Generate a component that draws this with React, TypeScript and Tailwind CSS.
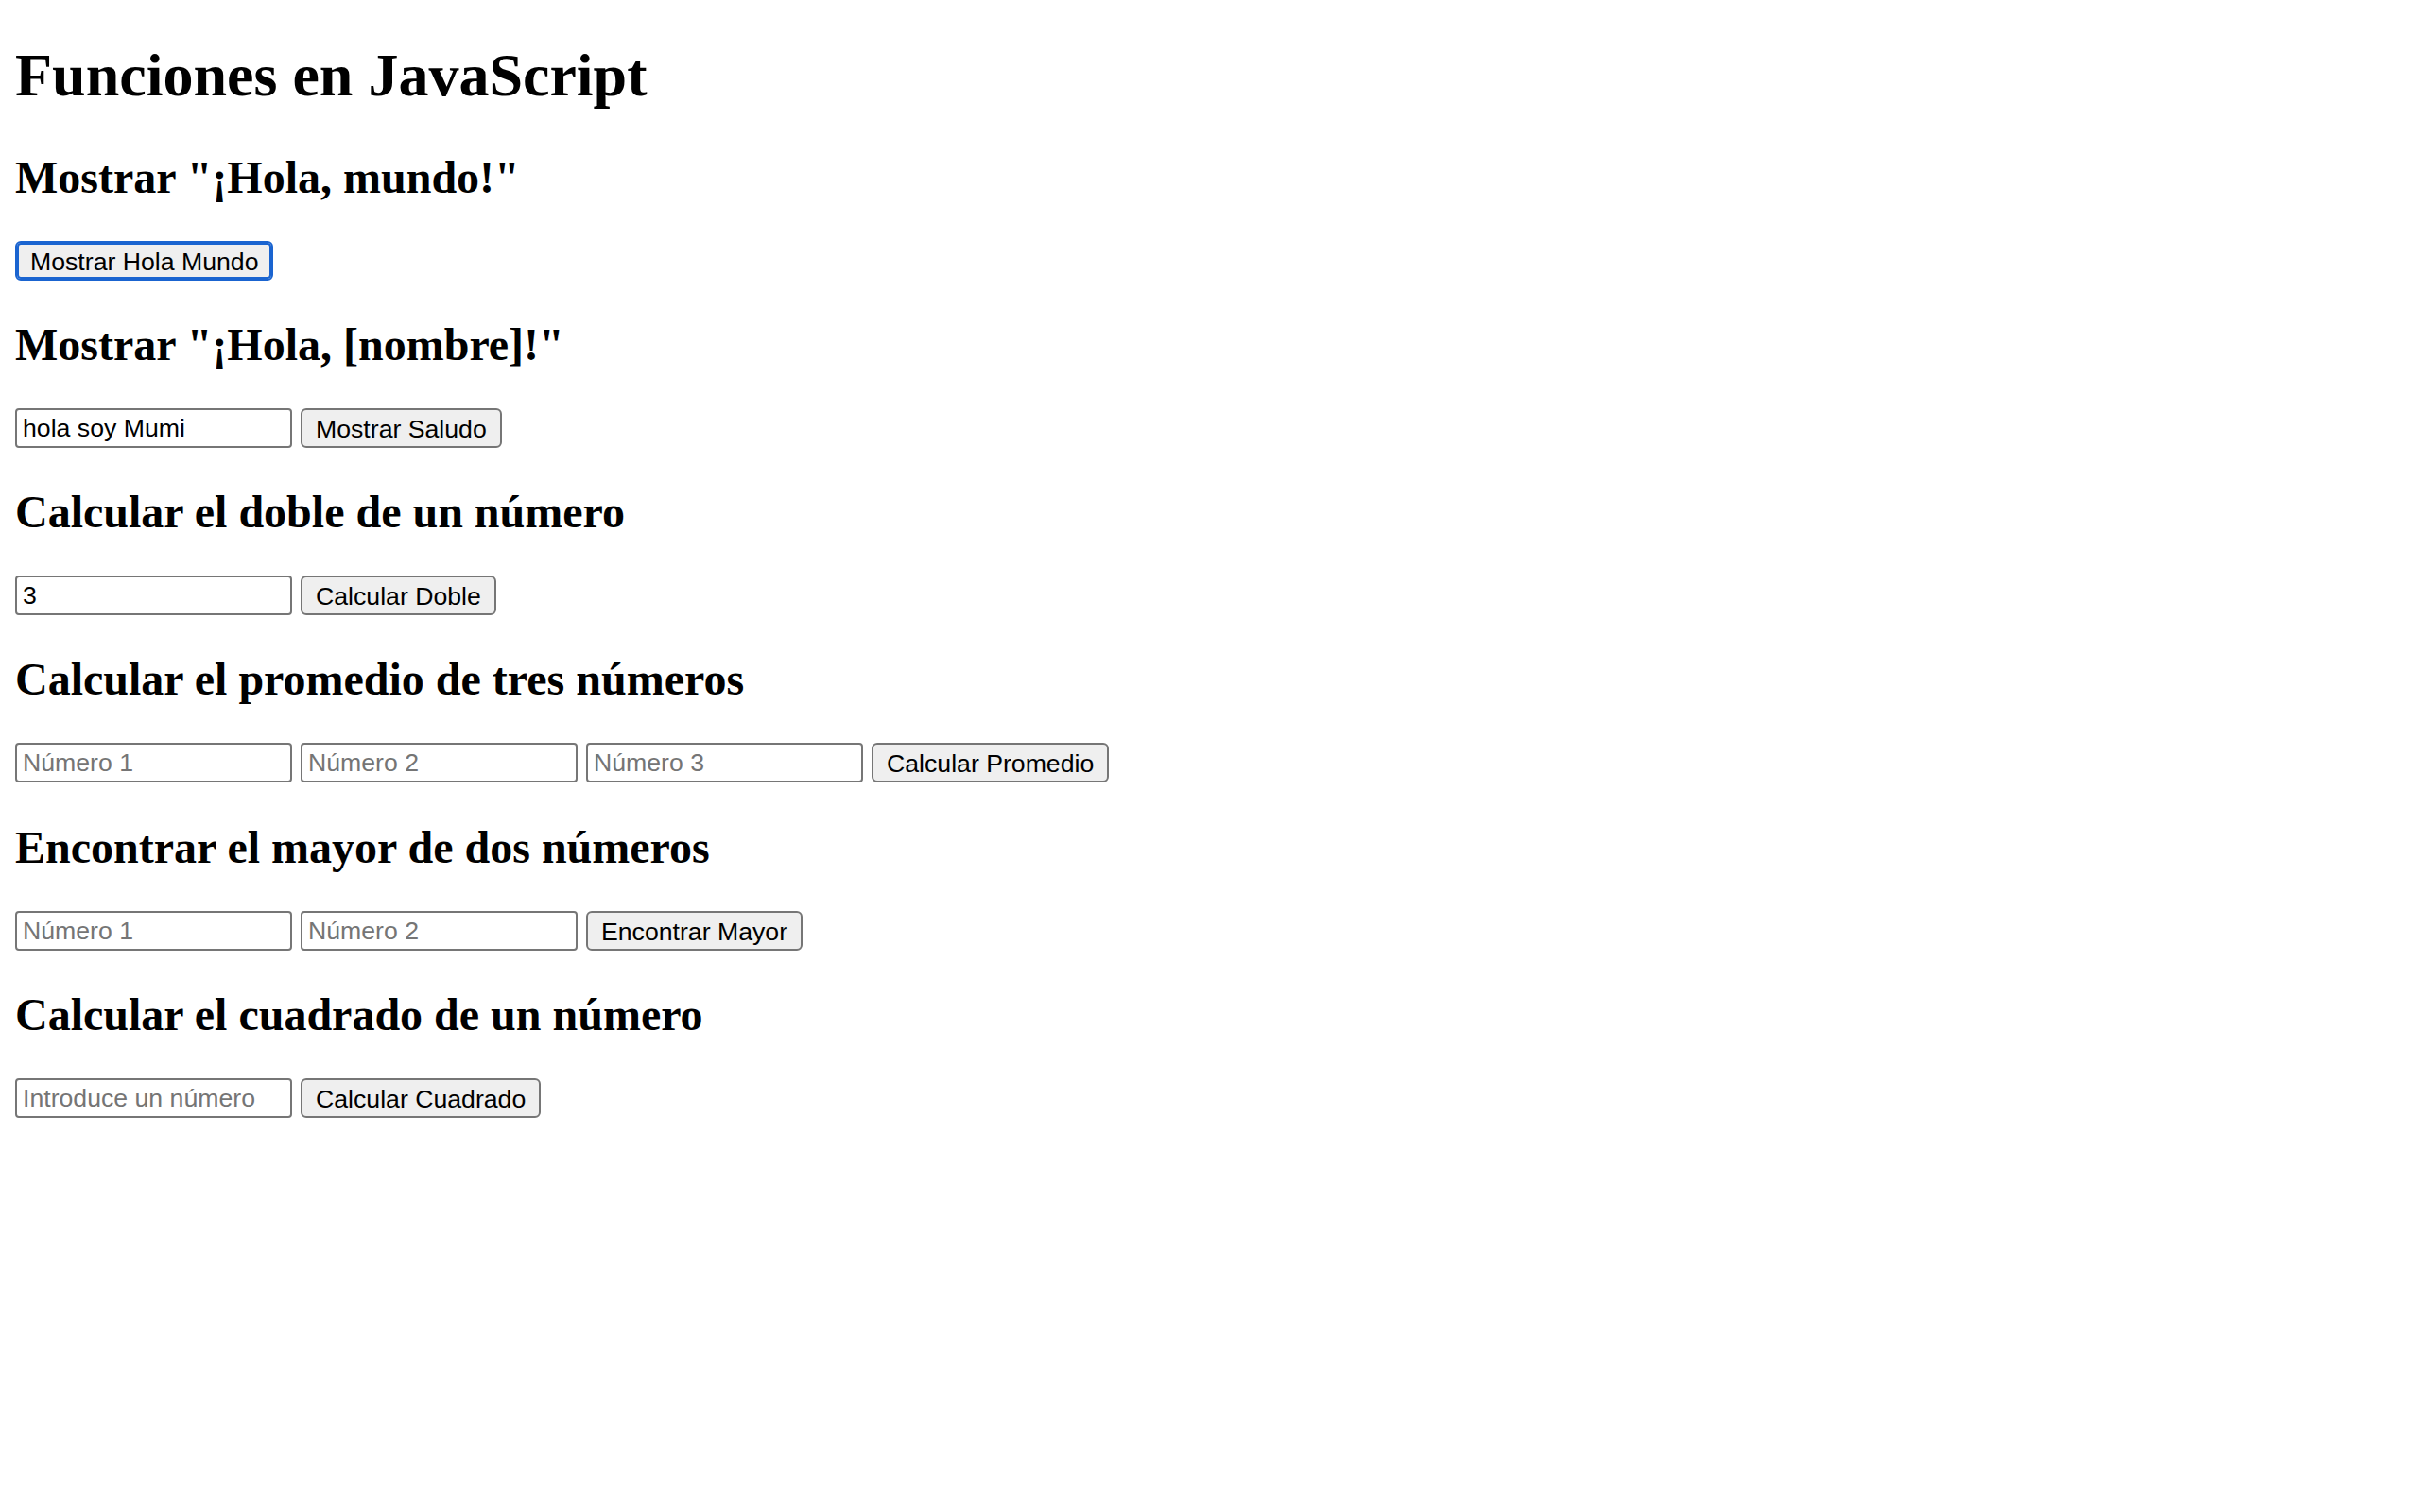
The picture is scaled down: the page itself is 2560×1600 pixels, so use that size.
import React from 'react';

const serif = { fontFamily: '"Liberation Serif", "Times New Roman", serif' };

function Field({ placeholder, value }: { placeholder?: string; value?: string }) {
  return (
    <input
      type="text"
      defaultValue={value}
      placeholder={placeholder}
      className="h-[42px] w-[293px] rounded-[4px] border-2 border-[#767676] bg-white pl-[6px] pr-[4px] pt-[1px] text-[26.67px] text-black placeholder:text-[#757575] focus:outline-none font-['Liberation_Sans',Arial,sans-serif]"
    />
  );
}

function Btn({ label, focused }: { label: string; focused?: boolean }) {
  return (
    <button
      className={
        focused
          ? "h-[42px] rounded-[6px] border-2 border-[#1a64d0] bg-[#efefef] px-[14px] text-[26.67px] text-black shadow-[inset_0_0_0_2px_#1a64d0] font-['Liberation_Sans',Arial,sans-serif]"
          : "h-[42px] rounded-[6px] border-2 border-[#767676] bg-[#efefef] px-[14px] text-[26.67px] text-black font-['Liberation_Sans',Arial,sans-serif]"
      }
    >
      {label}
    </button>
  );
}

function Section({ title, children }: { title: string; children: React.ReactNode }) {
  return (
    <>
      <h2 className="my-[39.84px] text-[48px] font-bold leading-[normal]" style={serif}>
        {title}
      </h2>
      <div className="flex h-[42.5px] items-center gap-[9px]">{children}</div>
    </>
  );
}

export default function App() {
  return (
    <div className="min-h-screen bg-white px-[16px] text-black" style={serif}>
      <h1 className="mt-[43px] mb-[42.88px] text-[64px] font-bold leading-[normal]">Funciones en JavaScript</h1>

      <Section title={'Mostrar "¡Hola, mundo!"'}>
        <Btn label="Mostrar Hola Mundo" focused />
      </Section>

      <Section title={'Mostrar "¡Hola, [nombre]!"'}>
        <Field value="hola soy Mumi" />
        <Btn label="Mostrar Saludo" />
      </Section>

      <Section title="Calcular el doble de un número">
        <Field value="3" />
        <Btn label="Calcular Doble" />
      </Section>

      <Section title="Calcular el promedio de tres números">
        <Field placeholder="Número 1" />
        <Field placeholder="Número 2" />
        <Field placeholder="Número 3" />
        <Btn label="Calcular Promedio" />
      </Section>

      <Section title="Encontrar el mayor de dos números">
        <Field placeholder="Número 1" />
        <Field placeholder="Número 2" />
        <Btn label="Encontrar Mayor" />
      </Section>

      <Section title="Calcular el cuadrado de un número">
        <Field placeholder="Introduce un número" />
        <Btn label="Calcular Cuadrado" />
      </Section>
    </div>
  );
}
